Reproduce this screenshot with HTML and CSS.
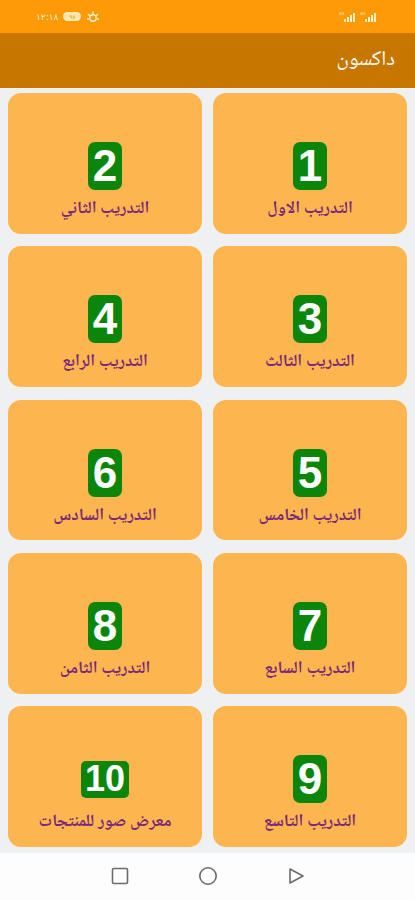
FILE: index.html
```html
<!DOCTYPE html>
<html lang="ar" dir="rtl">
<head>
<meta charset="utf-8">
<title>داكسون</title>
<link rel="stylesheet" href="styles.css">
</head>
<body>
<div class="screen">
  <div class="status" dir="ltr">
    <div class="status-left">
      <span class="time">١٢:١٨</span>
      <span class="battery"><span class="battery-level">٩٨</span></span>
      <svg class="status-icon" width="14" height="12" viewBox="0 0 14 12">
        <circle cx="7" cy="7" r="3.2" fill="none" stroke="#fff3c8" stroke-width="1.4"/>
        <path d="M2 3 L4 5 M12 3 L10 5 M7 0.5 V3 M1 8 H3 M11 8 H13" stroke="#fff3c8" stroke-width="1.3"/>
      </svg>
    </div>
    <div class="status-right">
      <svg width="40" height="12" viewBox="0 0 40 12">
        <text x="0" y="4" font-size="4" fill="#fff3c8" font-family="Liberation Sans">4G</text>
        <path d="M6 11 V8 M9 11 V6 M12 11 V4 M15 11 V2" stroke="#fff3c8" stroke-width="2"/>
        <text x="21" y="4" font-size="4" fill="#fff3c8" font-family="Liberation Sans">4G</text>
        <path d="M27 11 V8 M30 11 V6 M33 11 V4 M36 11 V2" stroke="#fff3c8" stroke-width="2"/>
      </svg>
    </div>
  </div>
  <header class="appbar">
    <h1 class="title">داكسون</h1>
  </header>
  <main class="grid">
    <div class="card"><div class="badge-area"><span class="badge">1</span></div><div class="label">التدريب الاول</div></div>
    <div class="card"><div class="badge-area"><span class="badge">2</span></div><div class="label">التدريب الثاني</div></div>
    <div class="card"><div class="badge-area"><span class="badge">3</span></div><div class="label">التدريب الثالث</div></div>
    <div class="card"><div class="badge-area"><span class="badge">4</span></div><div class="label">التدريب الرابع</div></div>
    <div class="card"><div class="badge-area"><span class="badge">5</span></div><div class="label">التدريب الخامس</div></div>
    <div class="card"><div class="badge-area"><span class="badge">6</span></div><div class="label">التدريب السادس</div></div>
    <div class="card"><div class="badge-area"><span class="badge">7</span></div><div class="label">التدريب السابع</div></div>
    <div class="card"><div class="badge-area"><span class="badge">8</span></div><div class="label">التدريب الثامن</div></div>
    <div class="card"><div class="badge-area"><span class="badge">9</span></div><div class="label">التدريب التاسع</div></div>
    <div class="card"><div class="badge-area"><span class="badge badge-small">10</span></div><div class="label">معرض صور للمنتجات</div></div>
  </main>
  <nav class="navbar" dir="ltr">
    <svg width="18" height="18" viewBox="0 0 18 18"><rect x="1.5" y="1.5" width="15" height="15" rx="1.5" fill="none" stroke="#6b6b6b" stroke-width="1.6"/></svg>
    <svg width="20" height="20" viewBox="0 0 20 20"><circle cx="10" cy="10" r="8.2" fill="none" stroke="#6b6b6b" stroke-width="1.6"/></svg>
    <svg width="18" height="18" viewBox="0 0 18 18"><path d="M3 2 L16 9 L3 16 Z" fill="none" stroke="#6b6b6b" stroke-width="1.6" stroke-linejoin="round"/></svg>
  </nav>
</div>
</body>
</html>
```
FILE: styles.css
```css
html, body {
  margin: 0;
  padding: 0;
}
body {
  width: 415px;
  height: 900px;
  background: #eef0f1;
  font-family: "Noto Naskh Arabic", "Noto Sans Arabic", "DejaVu Sans", sans-serif;
}
.screen {
  display: flex;
  flex-direction: column;
  height: 900px;
}
.status {
  height: 33px;
  background: #fe9a08;
  display: flex;
  align-items: center;
  justify-content: space-between;
  padding: 0 36px 0 36px;
  box-sizing: border-box;
  flex: none;
}
.status-left {
  display: flex;
  align-items: center;
  gap: 5px;
}
.time {
  font-family: "DejaVu Sans", sans-serif;
  font-size: 9px;
  color: #fff3c8;
}
.battery {
  display: inline-flex;
  align-items: center;
  justify-content: center;
  width: 18px;
  height: 9px;
  border-radius: 5px;
  background: #ffe9b0;
}
.battery-level {
  font-family: "DejaVu Sans", sans-serif;
  font-size: 6px;
  color: #e89a1a;
  line-height: 1;
}
.status-right {
  display: flex;
  align-items: center;
}
.appbar {
  height: 55px;
  background: #c77700;
  display: flex;
  align-items: center;
  padding: 0 20px;
  flex: none;
}
.title {
  margin: 0;
  font-size: 21px;
  font-weight: normal;
  color: #ffffff;
}
.grid {
  flex: 1;
  display: grid;
  grid-template-columns: 1fr 1fr;
  grid-template-rows: repeat(5, 1fr);
  column-gap: 11px;
  row-gap: 12.5px;
  padding: 5px 8px 6px;
}
.card {
  background: #fdb54f;
  border-radius: 13px;
  display: flex;
  flex-direction: column;
  align-items: center;
  padding-top: 49px;
  box-sizing: border-box;
}
.badge-area {
  height: 48px;
  display: flex;
  align-items: center;
  justify-content: center;
}
.badge {
  display: inline-flex;
  align-items: center;
  justify-content: center;
  height: 48px;
  padding: 0 5px;
  min-width: 20px;
  background: #0b860b;
  border-radius: 7px;
  color: #ffffff;
  font-family: "Liberation Sans", Arial, sans-serif;
  font-weight: bold;
  font-size: 44px;
  line-height: 1;
}
.badge-small {
  height: 37px;
  font-size: 36px;
  padding: 0 4px;
  border-radius: 5px;
}
.label {
  margin-top: 8px;
  font-size: 17px;
  font-weight: bold;
  line-height: 24px;
  color: #7a2a78;
}
.navbar {
  height: 47px;
  background: #fdfdfd;
  display: flex;
  align-items: center;
  justify-content: center;
  gap: 69px;
  flex: none;
  padding-bottom: 2px;
  box-sizing: border-box;
}
```
